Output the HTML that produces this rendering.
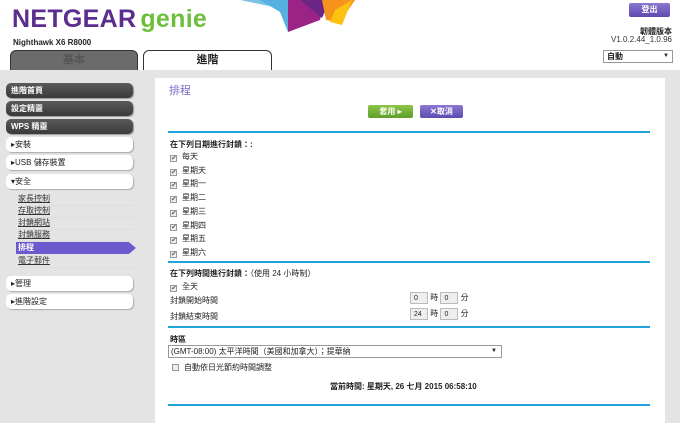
<!DOCTYPE html>
<html><head><meta charset="utf-8">
<style>
*{margin:0;padding:0;box-sizing:border-box}
body{width:680px;height:423px;overflow:hidden;background:#fff;font-family:"Liberation Sans","Noto Sans CJK TC",sans-serif;font-size:8px;color:#222;position:relative}
.abs{position:absolute}
.logo{left:12px;top:5px;font-size:25px;font-weight:bold;color:#5b2d8e;letter-spacing:0.3px}
.logo span{color:#6cbf3b;font-weight:bold;margin-left:4px}
.tab{top:50px;height:20px;border:1px solid #333;border-bottom:none;border-radius:6px 6px 0 0;text-align:center;font-size:11px;font-weight:bold;line-height:19px}
.gray{position:absolute;left:0;top:70px;width:680px;height:353px;background:#e4e4e4}
.panel{left:155px;top:78px;width:510px;height:345px;background:#fff}
.dbtn{left:6px;width:127px;height:15px;border-radius:5px;background:linear-gradient(#5a5a5a,#3a3a3a);color:#fff;font-weight:bold;font-size:8px;line-height:15px;padding-left:5px;box-shadow:1px 1px 1px #999}
.wbtn{left:6px;width:127px;height:15px;border-radius:5px;background:#fff;font-size:8px;line-height:15px;padding-left:5px;box-shadow:1px 1px 1px #aaa;color:#222}
.sub{left:18px;font-size:8px;text-decoration:underline;color:#333;width:116px;border-bottom:1px solid #ddd;height:13px;line-height:12px}
.line{height:2px;background:#1fa3d8}
.cb{display:inline-block;width:7px;height:7px;border:1px solid #999;background:#eee;margin-right:5px;vertical-align:-1px;font-size:7px;line-height:6px;color:#666;text-align:center}
.row{left:170px;font-size:8px}
.in{width:18px;height:12px;border:1px solid #bbb;background:#eee;font-size:7px;padding-left:3px;line-height:11px;display:inline-block;vertical-align:middle}
</style></head><body>
<svg class="abs" style="left:230px;top:0" width="130" height="36">
<polygon points="10,0 58,0 58,10" fill="#7ac1e6"/>
<polygon points="30,0 90,0 58,32 50,12" fill="#56b1e2"/>
<polygon points="58,0 95,0 90,20 58,32" fill="#9b2386"/>
<polygon points="70,0 100,0 92,18" fill="#6b2586"/>
<polygon points="92,0 125,0 110,22 96,20" fill="#f6921e"/>
<polygon points="105,10 122,0 112,25 100,22" fill="#fdc20f"/>
</svg>
<div class="abs logo">NETGEAR<span>genie</span></div>
<div class="abs" style="left:13px;top:38px;font-size:8px;font-weight:bold">Nighthawk X6 R8000</div>
<div class="abs tab" style="left:10px;width:128px;background:#6b6b6b;color:#555">基本</div>
<div class="abs tab" style="left:143px;width:129px;background:#fff;color:#222">進階</div>
<div class="abs" style="left:629px;top:3px;width:41px;height:14px;background:linear-gradient(#8a78d0,#5e4bb0);border-radius:2px;color:#fff;font-size:8px;text-align:center;line-height:14px;font-weight:bold">登出</div>
<div class="abs" style="right:8px;top:26px;font-size:8px;font-weight:bold">韌體版本</div>
<div class="abs" style="right:8px;top:35px;font-size:8px;color:#333">V1.0.2.44_1.0.96</div>
<div class="abs" style="left:603px;top:50px;width:70px;height:13px;border:1px solid #999;font-size:8px;font-weight:bold;padding-left:3px;line-height:11px">自動<span style="float:right;margin-right:3px;font-size:6px">▼</span></div>
<div class="gray"></div>
<div class="abs panel"></div>
<div class="abs dbtn" style="top:83px">進階首頁</div>
<div class="abs dbtn" style="top:101px">設定精靈</div>
<div class="abs dbtn" style="top:119px">WPS 精靈</div>
<div class="abs wbtn" style="top:137px">▸安裝</div>
<div class="abs wbtn" style="top:155px">▸USB 儲存裝置</div>
<div class="abs wbtn" style="top:174px">▾安全</div>
<div class="abs sub" style="top:193px">家長控制</div>
<div class="abs sub" style="top:205px">存取控制</div>
<div class="abs sub" style="top:217px">封鎖網站</div>
<div class="abs sub" style="top:229px">封鎖服務</div>
<div class="abs" style="left:16px;top:242px;width:120px;height:12px;background:#6a5acd;color:#fff;font-weight:bold;padding-left:2px;line-height:12px;clip-path:polygon(0 0,94% 0,100% 50%,94% 100%,0 100%)">排程</div>
<div class="abs sub" style="top:255px">電子郵件</div>
<div class="abs wbtn" style="top:276px">▸管理</div>
<div class="abs wbtn" style="top:294px">▸進階設定</div>

<div class="abs" style="left:169px;top:82px;font-size:11px;color:#7a6cc8">排程</div>
<div class="abs" style="left:368px;top:105px;width:45px;height:13px;background:linear-gradient(#8cc646,#5e9e2a);border-radius:2px;color:#fff;font-weight:bold;text-align:center;line-height:13px">套用 ▸</div>
<div class="abs" style="left:420px;top:105px;width:43px;height:13px;background:linear-gradient(#8a78d0,#5e4bb0);border-radius:2px;color:#fff;font-weight:bold;text-align:center;line-height:13px">✕取消</div>
<div class="abs line" style="left:168px;top:131px;width:482px"></div>
<div class="abs row" style="top:139px;font-weight:bold">在下列日期進行封鎖：:</div>
<div class="abs row" style="top:151px"><span class="cb">✔</span>每天</div>
<div class="abs row" style="top:165px"><span class="cb">✔</span>星期天</div>
<div class="abs row" style="top:178px"><span class="cb">✔</span>星期一</div>
<div class="abs row" style="top:192px"><span class="cb">✔</span>星期二</div>
<div class="abs row" style="top:206px"><span class="cb">✔</span>星期三</div>
<div class="abs row" style="top:220px"><span class="cb">✔</span>星期四</div>
<div class="abs row" style="top:233px"><span class="cb">✔</span>星期五</div>
<div class="abs row" style="top:247px"><span class="cb">✔</span>星期六</div>
<div class="abs line" style="left:168px;top:261px;width:482px"></div>
<div class="abs row" style="top:268px"><b>在下列時間進行封鎖：</b>（使用 24 小時制）</div>
<div class="abs row" style="top:281px"><span class="cb">✔</span>全天</div>
<div class="abs row" style="top:295px">封鎖開始時間</div>
<div class="abs row" style="top:311px">封鎖結束時間</div>
<div class="abs" style="left:410px;top:292px"><span class="in">0</span> 時 <span class="in">0</span> 分</div>
<div class="abs" style="left:410px;top:308px"><span class="in">24</span> 時 <span class="in">0</span> 分</div>
<div class="abs line" style="left:168px;top:326px;width:482px"></div>
<div class="abs row" style="top:334px;font-weight:bold">時區</div>
<div class="abs" style="left:168px;top:345px;width:334px;height:13px;border:1px solid #999;font-size:8px;padding-left:2px;line-height:11px">(GMT-08:00) 太平洋時間（美國和加拿大）；提華納<span style="float:right;margin-right:4px;font-size:6px">▼</span></div>
<div class="abs row" style="top:362px;left:172px"><span class="cb"></span>自動依日光節約時間調整</div>
<div class="abs" style="left:330px;top:381px;font-weight:bold;font-size:8px">當前時間:  星期天, 26 七月 2015 06:58:10</div>
<div class="abs line" style="left:168px;top:404px;width:482px"></div>
</body></html>
